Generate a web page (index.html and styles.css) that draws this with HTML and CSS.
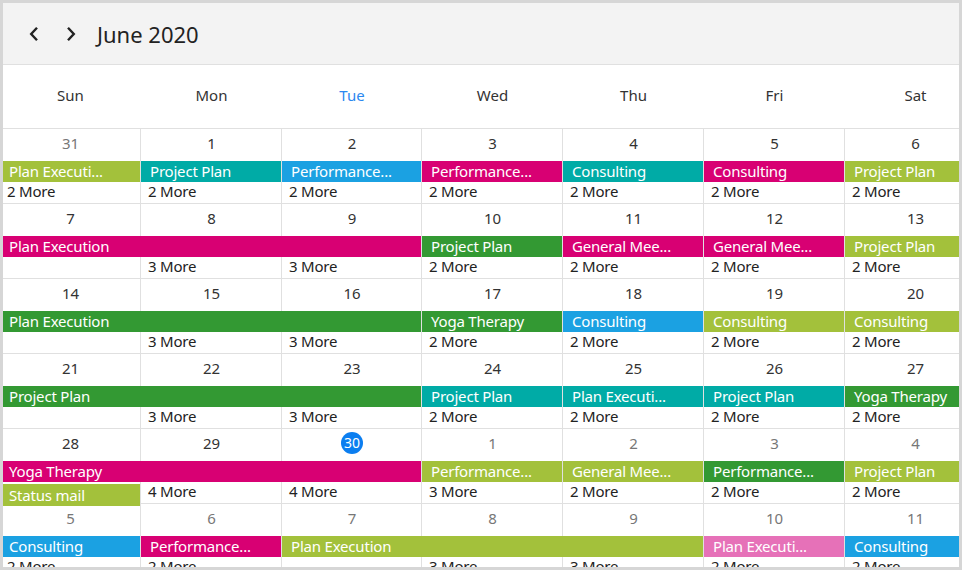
FILE: index.html
```html
<!DOCTYPE html>
<html lang="en">
<head>
    <meta charset="UTF-8">
    <title>June 2020</title>
    <link rel="stylesheet" href="styles.css">
</head>
<body>
    <div class="frame">
        <div class="toolbar">
            <button class="nav-btn" title="Previous">
                <svg width="12" height="16" viewBox="0 0 12 16"><path d="M9 1.8 L3.2 8 L9 14.2" fill="none" stroke="#222" stroke-width="2.4"/></svg>
            </button>
            <button class="nav-btn" title="Next">
                <svg width="12" height="16" viewBox="0 0 12 16"><path d="M3 1.8 L8.8 8 L3 14.2" fill="none" stroke="#222" stroke-width="2.4"/></svg>
            </button>
            <span class="title">June 2020</span>
        </div>

        <div class="month">
            <div class="day-names">
                <div>Sun</div><div>Mon</div><div class="today">Tue</div><div>Wed</div><div>Thu</div><div>Fri</div><div>Sat</div>
            </div>

            <!-- week 1 -->
            <div class="week">
                <div class="cell c1"></div><div class="cell c2"></div><div class="cell c3"></div><div class="cell c4"></div><div class="cell c5"></div><div class="cell c6"></div><div class="cell c7"></div>
                <div class="date other c1">31</div><div class="date c2">1</div><div class="date c3">2</div><div class="date c4">3</div><div class="date c5">4</div><div class="date c6">5</div><div class="date c7">6</div>
                <div class="ev lime c1">Plan Executi...</div>
                <div class="ev teal c2">Project Plan</div>
                <div class="ev blue c3">Performance...</div>
                <div class="ev magenta c4">Performance...</div>
                <div class="ev teal c5">Consulting</div>
                <div class="ev magenta c6">Consulting</div>
                <div class="ev lime c7">Project Plan</div>
                <div class="more c1">2 More</div><div class="more c2">2 More</div><div class="more c3">2 More</div><div class="more c4">2 More</div><div class="more c5">2 More</div><div class="more c6">2 More</div><div class="more c7">2 More</div>
            </div>

            <!-- week 2 -->
            <div class="week">
                <div class="cell c1"></div><div class="cell c2"></div><div class="cell c3"></div><div class="cell c4"></div><div class="cell c5"></div><div class="cell c6"></div><div class="cell c7"></div>
                <div class="date c1">7</div><div class="date c2">8</div><div class="date c3">9</div><div class="date c4">10</div><div class="date c5">11</div><div class="date c6">12</div><div class="date c7">13</div>
                <div class="ev magenta c1 s3">Plan Execution</div>
                <div class="ev green c4">Project Plan</div>
                <div class="ev magenta c5">General Mee...</div>
                <div class="ev magenta c6">General Mee...</div>
                <div class="ev lime c7">Project Plan</div>
                <div class="more c2">3 More</div><div class="more c3">3 More</div><div class="more c4">2 More</div><div class="more c5">2 More</div><div class="more c6">2 More</div><div class="more c7">2 More</div>
            </div>

            <!-- week 3 -->
            <div class="week">
                <div class="cell c1"></div><div class="cell c2"></div><div class="cell c3"></div><div class="cell c4"></div><div class="cell c5"></div><div class="cell c6"></div><div class="cell c7"></div>
                <div class="date c1">14</div><div class="date c2">15</div><div class="date c3">16</div><div class="date c4">17</div><div class="date c5">18</div><div class="date c6">19</div><div class="date c7">20</div>
                <div class="ev green c1 s3">Plan Execution</div>
                <div class="ev green c4">Yoga Therapy</div>
                <div class="ev blue c5">Consulting</div>
                <div class="ev lime c6">Consulting</div>
                <div class="ev lime c7">Consulting</div>
                <div class="more c2">3 More</div><div class="more c3">3 More</div><div class="more c4">2 More</div><div class="more c5">2 More</div><div class="more c6">2 More</div><div class="more c7">2 More</div>
            </div>

            <!-- week 4 -->
            <div class="week">
                <div class="cell c1"></div><div class="cell c2"></div><div class="cell c3"></div><div class="cell c4"></div><div class="cell c5"></div><div class="cell c6"></div><div class="cell c7"></div>
                <div class="date c1">21</div><div class="date c2">22</div><div class="date c3">23</div><div class="date c4">24</div><div class="date c5">25</div><div class="date c6">26</div><div class="date c7">27</div>
                <div class="ev green c1 s3">Project Plan</div>
                <div class="ev teal c4">Project Plan</div>
                <div class="ev teal c5">Plan Executi...</div>
                <div class="ev teal c6">Project Plan</div>
                <div class="ev green c7">Yoga Therapy</div>
                <div class="more c2">3 More</div><div class="more c3">3 More</div><div class="more c4">2 More</div><div class="more c5">2 More</div><div class="more c6">2 More</div><div class="more c7">2 More</div>
            </div>

            <!-- week 5 -->
            <div class="week">
                <div class="cell c1"></div><div class="cell c2"></div><div class="cell c3"></div><div class="cell c4"></div><div class="cell c5"></div><div class="cell c6"></div><div class="cell c7"></div>
                <div class="date c1">28</div><div class="date c2">29</div><div class="date c3"><span class="today-num">30</span></div><div class="date other c4">1</div><div class="date other c5">2</div><div class="date other c6">3</div><div class="date other c7">4</div>
                <div class="ev magenta c1 s3">Yoga Therapy</div>
                <div class="ev lime c4">Performance...</div>
                <div class="ev lime c5">General Mee...</div>
                <div class="ev green c6">Performance...</div>
                <div class="ev lime c7">Project Plan</div>
                <div class="ev lime c1 second">Status mail</div>
                <div class="more c2">4 More</div><div class="more c3">4 More</div><div class="more c4">3 More</div><div class="more c5">2 More</div><div class="more c6">2 More</div><div class="more c7">2 More</div>
            </div>

            <!-- week 6 -->
            <div class="week">
                <div class="cell c1"></div><div class="cell c2"></div><div class="cell c3"></div><div class="cell c4"></div><div class="cell c5"></div><div class="cell c6"></div><div class="cell c7"></div>
                <div class="date other c1">5</div><div class="date other c2">6</div><div class="date other c3">7</div><div class="date other c4">8</div><div class="date other c5">9</div><div class="date other c6">10</div><div class="date other c7">11</div>
                <div class="ev blue c1">Consulting</div>
                <div class="ev magenta c2">Performance...</div>
                <div class="ev lime c3 s3">Plan Execution</div>
                <div class="ev pink c6">Plan Executi...</div>
                <div class="ev blue c7">Consulting</div>
                <div class="more c1">2 More</div><div class="more c2">2 More</div><div class="more c4">3 More</div><div class="more c5">3 More</div><div class="more c6">2 More</div><div class="more c7">2 More</div>
            </div>
        </div>
    </div>
</body>
</html>
```

FILE: styles.css
```css
body {
    margin: 0;
    font-family: 'Noto Sans', 'Open Sans', sans-serif;
    background-color: #fff;
    color: #333;
}
.frame {
    width: 962px;
    height: 570px;
    box-sizing: border-box;
    border: 3px solid #d6d6d6;
    overflow: hidden;
}
.toolbar {
    height: 61px;
    display: flex;
    align-items: center;
    padding-left: 12px;
    background-color: #f3f3f3;
    border-bottom: 1px solid #e0e0e0;
}
.nav-btn {
    width: 37px;
    height: 36px;
    display: flex;
    align-items: center;
    justify-content: center;
    padding: 0;
    border: none;
    background: none;
    cursor: pointer;
}
.title {
    margin-left: 8px;
    font-size: 22px;
    color: #222;
}
.month {
    margin-left: -3px;
    width: 986px;
}
.day-names {
    display: grid;
    grid-template-columns: 141px 141px 140px 141px 141px 141px 141px;
    height: 64px;
    box-sizing: border-box;
    padding-bottom: 3px;
    align-items: center;
    text-align: center;
    font-size: 15px;
    border-bottom: 1px solid #e0e0e0;
}
.day-names .today {
    color: #2b88f0;
}
.week {
    display: grid;
    grid-template-columns: 141px 141px 140px 141px 141px 141px 141px;
    grid-template-rows: 32px 22px 21px;
    height: 75px;
    font-size: 15px;
}
.cell {
    grid-row: 1 / 4;
    border-right: 1px solid #e0e0e0;
    border-bottom: 1px solid #e0e0e0;
}
.c1 { grid-column: 1; }
.c2 { grid-column: 2; }
.c3 { grid-column: 3; }
.c4 { grid-column: 4; }
.c5 { grid-column: 5; }
.c6 { grid-column: 6; }
.c7 { grid-column: 7; }
.s3 { grid-column-end: span 3; }
.date {
    grid-row: 1;
    text-align: center;
    line-height: 28px;
    color: #333;
}
.date.other {
    color: #777;
}
.today-num {
    display: inline-block;
    width: 22px;
    height: 22px;
    margin-top: 3px;
    border-radius: 50%;
    background-color: #0b7ef0;
    color: #fff;
    line-height: 22px;
    font-size: 14px;
    vertical-align: top;
}
.ev {
    grid-row: 2;
    height: 21px;
    margin-right: 1px;
    padding-left: 9px;
    line-height: 20px;
    letter-spacing: -0.2px;
    color: #fff;
    white-space: nowrap;
    overflow: hidden;
}
.ev.second {
    grid-row: 3;
    height: 22px;
    margin-top: 1px;
    line-height: 22px;
}
.more {
    grid-row: 3;
    padding-left: 7px;
    line-height: 14px;
    margin-top: 1px;
    letter-spacing: -0.2px;
    color: #222;
    white-space: nowrap;
}
.lime { background-color: #a3c13b; }
.teal { background-color: #00aba6; }
.blue { background-color: #1ba1e2; }
.magenta { background-color: #d80073; }
.green { background-color: #339933; }
.pink { background-color: #e671b8; }
```
